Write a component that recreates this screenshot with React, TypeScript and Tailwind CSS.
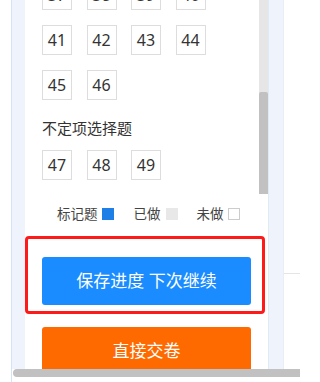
const rows = [
  [37, 38, 39, 40],
  [41, 42, 43, 44],
  [45, 46],
];

function NumBox({ n }: { n: number }) {
  return (
    <div className="w-[30px] h-[30px] border border-[#dddddd] bg-white flex items-center justify-center text-[16px] text-[#333333] leading-none">
      {n}
    </div>
  );
}

export default function App() {
  return (
    <div
      className="w-[300px] h-[382px] overflow-hidden bg-white"
      style={{ fontFamily: '"Noto Sans", "Noto Sans CJK SC", sans-serif' }}
    >
      <div className="flex h-[369px] overflow-hidden">
        <div className="w-[11px] bg-white" />
        {/* side column + panel */}
        <div className="flex border-l border-[#d6e3f5] bg-[#eff3fb] pl-[13px]">
          <div className="w-[243px] bg-white flex flex-col overflow-hidden">
            {/* scrolled question list */}
            <div className="flex shrink-0 h-[196px] overflow-hidden">
              <div className="flex-1 overflow-hidden pl-[17px]">
                <div className="mt-[-20px] flex flex-col">
                  <div className="flex flex-col gap-y-[15px]">
                    {rows.map((r, i) => (
                      <div key={i} className="flex gap-x-[14.5px]">
                        {r.map((n) => (
                          <NumBox key={n} n={n} />
                        ))}
                      </div>
                    ))}
                  </div>
                  <div className="mt-[18px] h-[20px] leading-[20px] text-[15px] text-[#333333]">
                    不定项选择题
                  </div>
                  <div className="mt-[12px] flex gap-x-[14.5px]">
                    {[47, 48, 49].map((n) => (
                      <NumBox key={n} n={n} />
                    ))}
                  </div>
                </div>
              </div>
              <div className="w-[9px] h-[194px] bg-[#e6e6e6] flex flex-col justify-end">
                <div className="h-[102px] bg-[#c1c1c1] rounded-t-[2px]" />
              </div>
            </div>

            {/* legend */}
            <div className="shrink-0 mt-[11px] pl-[32px] flex items-center h-[14px] text-[13.5px] text-[#444444]">
              <span>标记题</span>
              <span className="ml-[4px] w-[12px] h-[12px] bg-[#1e80e6]" />
              <span className="ml-[20px]">已做</span>
              <span className="ml-[5px] w-[12px] h-[12px] bg-[#e8e8e8]" />
              <span className="ml-[19px]">未做</span>
              <span className="ml-[4px] w-[12px] h-[12px] border border-[#cccccc] bg-white" />
            </div>

            {/* highlighted save button */}
            <div className="shrink-0 mt-[15px] w-[240px] border-[3px] border-[#ff1a1a] rounded-[4px] pl-[14px] pt-[18px] pb-[6px]">
              <button className="w-[209px] h-[48px] rounded-[3px] bg-[#1a8cff] text-white text-[17px] flex items-center justify-center">
                保存进度 下次继续
              </button>
            </div>

            <div className="shrink-0 mt-[13px] pl-[17px]">
              <button className="w-[209px] h-[48px] rounded-[3px] bg-[#ff6a00] text-white text-[17px] flex items-center justify-center">
                直接交卷
              </button>
            </div>
          </div>
          <div className="w-[15px] border-l border-[#e3e9f3] bg-[#eef3fc]" />
        </div>
        <div className="flex-1 bg-white border-l border-[#e9eef6] flex flex-col">
          <div className="h-[273px]" />
          <div className="h-px bg-[#e5e5e5]" />
        </div>
      </div>
      {/* horizontal scrollbar */}
      <div className="flex h-[8px]">
        <div className="w-[11px] bg-white" />
        <div className="flex-1 border-l border-[#d6e3f5] pl-px">
          <div className="h-full bg-[#c1c1c1] rounded-l-full" />
        </div>
      </div>
      <div className="flex h-[5px]">
        <div className="w-[11px] bg-white" />
        <div className="flex-1 border-l border-[#d6e3f5] bg-white" />
      </div>
    </div>
  );
}
